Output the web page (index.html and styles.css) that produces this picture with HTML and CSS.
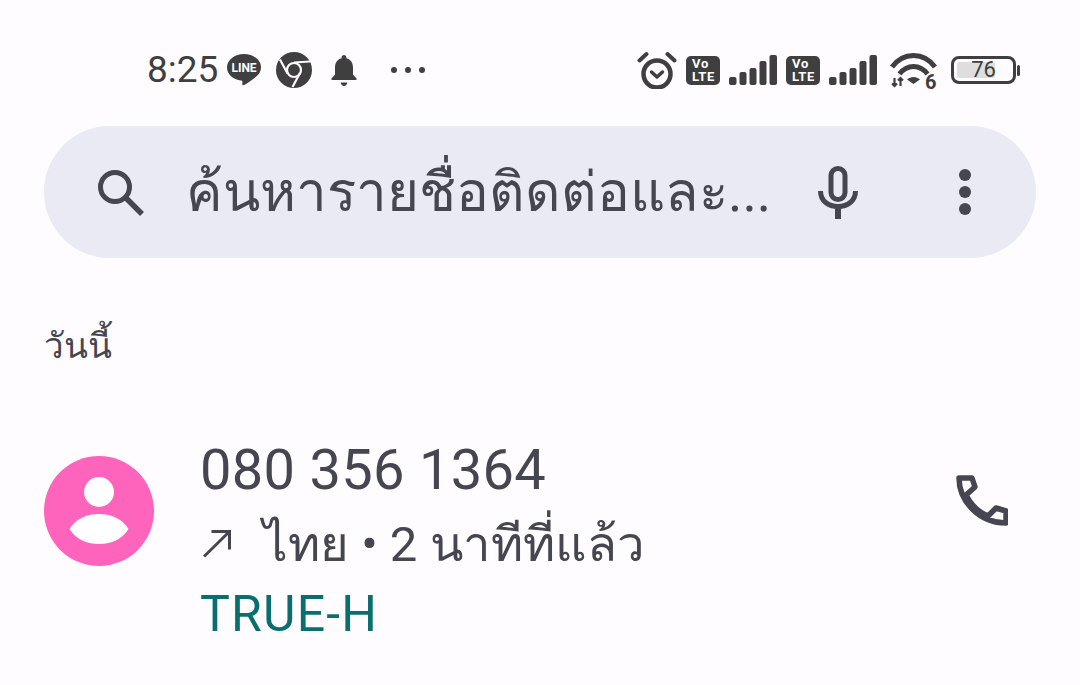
FILE: index.html
```html
<!DOCTYPE html>
<html lang="th">
  <head>
    <meta charset="UTF-8" />
    <meta name="viewport" content="width=device-width, initial-scale=1.0" />
    <title>Recents</title>
    <link rel="stylesheet" href="styles.css">
  </head>
  <body>
    <div class="status">
      <div class="status__left">
        <span class="status__time">8:25</span>
        <svg class="icon-line" viewBox="0 0 34 32">
          <path fill="currentColor" d="M17 0C7.6 0 0 6 0 13.4c0 6.6 6 12.1 14.1 13.2.6.1 1.2.4 1.3.9.1.5 0 1.6-.1 2.2-.1.6.3 2.3 2.3 1.1 1.9-1 8.8-5.5 12.5-9.1 2.5-2.3 3.9-5.200 3.900-8.300C34 6 26.400 0 17 0z"/>
          <text x="17" y="18" class="icon-line__text">LINE</text>
        </svg>
        <svg class="icon-chrome" viewBox="0 0 36 36">
          <circle cx="18" cy="18" r="18" fill="currentColor"/>
          <circle cx="18" cy="18" r="7" fill="none" stroke="#fefcff" stroke-width="2.200"/>
          <path fill="none" stroke="#fefcff" stroke-width="2.200" d="M18 10.500 34 9.500M11.500 21.500 4 7.500M24 21 16.500 35"/>
        </svg>
        <svg class="icon-bell" viewBox="0 0 26 31">
          <path fill="currentColor" d="M13 0c1.400 0 2.400 1 2.400 2.400v.9c4.300 1.100 6.600 4.700 6.600 9.100v7.400l3.500 3.600v1.600H.5v-1.600L4 19.800v-7.400c0-4.400 2.300-8 6.600-9.100v-.9C10.600 1 11.600 0 13 0zM9.800 27.600h6.400c0 1.900-1.400 3.400-3.200 3.400s-3.200-1.500-3.200-3.400z"/>
        </svg>
        <div class="status__more"><i></i><i></i><i></i></div>
      </div>
      <div class="status__right">
        <svg class="icon-alarm" viewBox="0 0 40 38">
          <circle cx="20" cy="23" r="13.500" fill="none" stroke="currentColor" stroke-width="4.500"/>
          <path fill="none" stroke="currentColor" stroke-width="4" stroke-linecap="round" d="M2.500 9.500 9.500 3M37.500 9.500 30.500 3"/>
          <path fill="none" stroke="currentColor" stroke-width="3.500" stroke-linecap="round" stroke-linejoin="round" d="M14.500 21 20 26l5.500-5"/>
        </svg>
        <div class="volte"><span>Vo</span><span>LTE</span></div>
        <svg class="icon-signal" viewBox="0 0 48 30">
          <rect x="0" y="22" width="7.500" height="8" rx="2"/>
          <rect x="10.500" y="17" width="7" height="13" rx="2"/>
          <rect x="20.500" y="13" width="7" height="17" rx="2"/>
          <rect x="30.500" y="6" width="7" height="24" rx="2"/>
          <rect x="40.500" y="0" width="7.500" height="30" rx="2"/>
        </svg>
        <div class="volte"><span>Vo</span><span>LTE</span></div>
        <svg class="icon-signal" viewBox="0 0 48 30">
          <rect x="0" y="22" width="7.500" height="8" rx="2"/>
          <rect x="10.500" y="17" width="7" height="13" rx="2"/>
          <rect x="20.500" y="13" width="7" height="17" rx="2"/>
          <rect x="30.500" y="6" width="7" height="24" rx="2"/>
          <rect x="40.500" y="0" width="7.500" height="30" rx="2"/>
        </svg>
        <svg class="icon-wifi" viewBox="0 0 47 43">
          <g fill="none" stroke="currentColor" stroke-width="5">
            <path d="M2 15C13-.5 34-.5 45 15"/>
            <path d="M9.500 22C17 12 30 12 37.500 22"/>
          </g>
          <path fill="currentColor" d="M17 27.500c3.500-3.500 9.500-3.500 13 0l-6.500 4.500z"/>
          <path fill="none" stroke="currentColor" stroke-width="2.200" d="M4.500 26v8M2 31.500 4.500 34 7 31.500M10.500 34v-8M8 28.500 10.500 26l2.500 2.500"/>
          <text x="35" y="37" class="icon-wifi__text">6</text>
        </svg>
        <div class="battery">
          <div class="battery__body">
            <div class="battery__level"></div>
            <span class="battery__text">76</span>
          </div>
          <div class="battery__cap"></div>
        </div>
      </div>
    </div>

    <div class="search">
      <svg class="search__icon" viewBox="0 0 48 48">
        <circle cx="19" cy="19" r="14.500" fill="none" stroke="currentColor" stroke-width="5"/>
        <path stroke="currentColor" stroke-width="5.500" d="M29.500 29.500 46 46"/>
      </svg>
      <span class="search__text">ค้นหารายชื่อติดต่อและ...</span>
      <svg class="search__mic" viewBox="0 0 40 53">
        <rect x="13" y="2.500" width="14" height="31" rx="7" fill="none" stroke="currentColor" stroke-width="5"/>
        <path fill="none" stroke="currentColor" stroke-width="5" d="M2.500 25c0 10 8 15.500 17.500 15.500S37.500 35 37.500 25"/>
        <path stroke="currentColor" stroke-width="6" d="M20 40v13"/>
      </svg>
      <div class="search__more"><i></i><i></i><i></i></div>
    </div>

    <div class="section">วันนี้</div>

    <div class="call">
      <div class="call__avatar">
        <svg viewBox="0 0 110 110">
          <circle cx="55" cy="36" r="15" fill="#fff"/>
          <path fill="#fff" d="M25.500 73C32 62 44 58 55 58s23 4 29.500 15C78 84 66 88 55 88s-23-4-29.500-15z"/>
        </svg>
      </div>
      <div class="call__info">
        <div class="call__number">080 356 1364</div>
        <div class="call__meta">
          <svg class="call__arrow" viewBox="0 0 28 28">
            <path fill="none" stroke="currentColor" stroke-width="3" d="M1 26.500 26.500 1.500M8.500 1.500h18v18"/>
          </svg>
          <span>ไทย • 2 นาทีที่แล้ว</span>
        </div>
        <div class="call__carrier">TRUE-H</div>
      </div>
      <svg class="call__phone" viewBox="0 0 52 52">
        <path fill="none" stroke="currentColor" stroke-width="5.500" stroke-linejoin="round" d="M3 3h13l3 9-9 8c5 10 12 17 22 21l8-8 10 3v12C24 48 3 27 3 3z"/>
      </svg>
    </div>
  </body>
</html>
```

FILE: styles.css
```css
body {
  margin: 0;
  width: 1080px;
  height: 685px;
  overflow: hidden;
  background: #fefcff;
  color: #45464f;
  font-family: Roboto, "Noto Sans", sans-serif;
}

/* status bar */
.status {
  display: flex;
  justify-content: space-between;
  align-items: center;
  height: 36px;
  padding: 52px 60px 0 147px;
  color: #3f3f3f;
}
.status__left,
.status__right {
  display: flex;
  align-items: center;
}
.status__time {
  width: 80px;
  font-size: 37px;
  line-height: 36px;
}
.icon-line {
  width: 34px;
  height: 32px;
  margin-right: 15px;
}
.icon-line__text {
  font: 700 12px Roboto, sans-serif;
  fill: #fff;
  text-anchor: middle;
}
.icon-chrome {
  width: 36px;
  height: 36px;
  margin-right: 19px;
}
.icon-bell {
  width: 26px;
  height: 31px;
  margin-right: 34px;
}
.status__more {
  display: flex;
  gap: 8px;
}
.status__more i {
  width: 6px;
  height: 6px;
  border-radius: 50%;
  background: currentColor;
}
.status__right {
  gap: 9px;
}
.icon-alarm {
  width: 40px;
  height: 38px;
}
.volte {
  display: flex;
  flex-direction: column;
  align-items: flex-start;
  box-sizing: border-box;
  width: 34px;
  height: 29px;
  padding: 1px 0 0 6px;
  border-radius: 5px;
  background: #3f3f3f;
  color: #fff;
  font-size: 13px;
  font-weight: 700;
  letter-spacing: 0.7px;
  line-height: 13px;
}
.icon-signal {
  width: 48px;
  height: 30px;
  fill: currentColor;
}
.icon-wifi {
  width: 47px;
  height: 43px;
  margin: 6px 5px 0 4px;
}
.icon-wifi__text {
  font: 700 20px Roboto, sans-serif;
  fill: currentColor;
}
.battery {
  display: flex;
  align-items: center;
  gap: 1px;
}
.battery__body {
  position: relative;
  display: flex;
  align-items: center;
  justify-content: center;
  box-sizing: border-box;
  width: 65px;
  height: 28px;
  border: 3px solid #3f3f3f;
  border-radius: 8px;
}
.battery__level {
  position: absolute;
  left: 3px;
  top: 3px;
  bottom: 3px;
  width: 38px;
  border-radius: 2px;
  background: #dedede;
}
.battery__text {
  position: relative;
  font-size: 22px;
  line-height: 22px;
}
.battery__cap {
  width: 3px;
  height: 11px;
  border-radius: 2px;
  background: #3f3f3f;
}

/* search */
.search {
  display: flex;
  align-items: center;
  height: 132px;
  margin: 38px 44px 0;
  padding: 0 65px 0 52px;
  border-radius: 66px;
  background: #e9eaf3;
}
.search__icon {
  flex: none;
  width: 48px;
  height: 48px;
  margin-right: 42px;
}
.search__text {
  flex: 1;
  min-width: 0;
  font-size: 54.700px;
  line-height: 66px;
  white-space: nowrap;
}
.search__mic {
  flex: none;
  width: 40px;
  height: 53px;
  margin-right: 101px;
}
.search__more {
  display: flex;
  flex-direction: column;
  gap: 5px;
}
.search__more i {
  width: 12px;
  height: 12px;
  border-radius: 50%;
  background: currentColor;
}

/* today list */
.section {
  margin: 60px 0 0 44px;
  font-size: 35px;
  line-height: 58px;
}
.call {
  display: flex;
  align-items: flex-start;
  margin-top: 60px;
  padding: 0 72px 0 44px;
}
.call__avatar {
  flex: none;
  width: 110px;
  height: 110px;
  margin: 20px 46px 0 0;
  border-radius: 50%;
  background: #ff64bd;
}
.call__avatar svg {
  display: block;
}
.call__info {
  flex: 1;
}
.call__number {
  padding-top: 2px;
  font-size: 56px;
  letter-spacing: 0.300px;
  line-height: 64px;
}
.call__meta {
  display: flex;
  align-items: center;
  gap: 32px;
  height: 84px;
  padding-left: 3px;
  font-size: 49px;
}
.call__arrow {
  width: 28px;
  height: 28px;
}
.call__carrier {
  margin-top: 8px;
  color: #0b6e6e;
  font-size: 50px;
  letter-spacing: 1.200px;
  line-height: 40px;
}
.call__phone {
  width: 52px;
  height: 52px;
  margin-top: 39px;
}
```
